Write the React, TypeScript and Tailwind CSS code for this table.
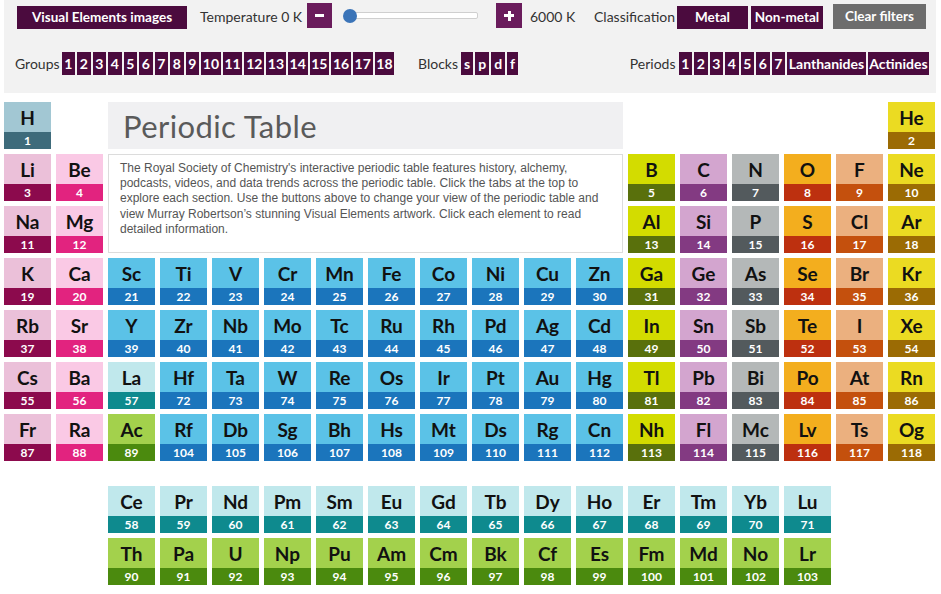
import React from 'react'

type Kind = 'h' | 'g1' | 'g2' | 'tm' | 'la' | 'ac' | 'g13' | 'g14' | 'g15' | 'g16' | 'g17' | 'g18'

const COLORS: Record<Kind, { top: string; bot: string }> = {
  h: { top: 'bg-[#a2c7d3]', bot: 'bg-[#3e6b7b]' },
  g1: { top: 'bg-[#ebc0d9]', bot: 'bg-[#8c0a4d]' },
  g2: { top: 'bg-[#fac9e5]', bot: 'bg-[#e2237f]' },
  tm: { top: 'bg-[#5bc2e7]', bot: 'bg-[#1b75bc]' },
  la: { top: 'bg-[#c0e8ec]', bot: 'bg-[#0e8a8e]' },
  ac: { top: 'bg-[#a3d14c]', bot: 'bg-[#4b8a0e]' },
  g13: { top: 'bg-[#d3dc00]', bot: 'bg-[#59700c]' },
  g14: { top: 'bg-[#d3a5cf]', bot: 'bg-[#833a82]' },
  g15: { top: 'bg-[#b4b8b8]', bot: 'bg-[#535a5d]' },
  g16: { top: 'bg-[#f3ae1e]', bot: 'bg-[#bd300f]' },
  g17: { top: 'bg-[#ebb07f]', bot: 'bg-[#c4500d]' },
  g18: { top: 'bg-[#ebdb22]', bot: 'bg-[#9b6b04]' },
}

const COL_START = [
  'col-start-1', 'col-start-2', 'col-start-3', 'col-start-4', 'col-start-5', 'col-start-6',
  'col-start-7', 'col-start-8', 'col-start-9', 'col-start-10', 'col-start-11', 'col-start-12',
  'col-start-13', 'col-start-14', 'col-start-15', 'col-start-16', 'col-start-17', 'col-start-18',
]
const ROW_START = ['row-start-1', 'row-start-2', 'row-start-3', 'row-start-4', 'row-start-5', 'row-start-6', 'row-start-7']

const P4 = 'K Ca Sc Ti V Cr Mn Fe Co Ni Cu Zn Ga Ge As Se Br Kr'.split(' ')
const P5 = 'Rb Sr Y Zr Nb Mo Tc Ru Rh Pd Ag Cd In Sn Sb Te I Xe'.split(' ')
const P6 = 'Cs Ba La Hf Ta W Re Os Ir Pt Au Hg Tl Pb Bi Po At Rn'.split(' ')
const P7 = 'Fr Ra Ac Rf Db Sg Bh Hs Mt Ds Rg Cn Nh Fl Mc Lv Ts Og'.split(' ')
const LAN = 'Ce Pr Nd Pm Sm Eu Gd Tb Dy Ho Er Tm Yb Lu'.split(' ')
const ACT = 'Th Pa U Np Pu Am Cm Bk Cf Es Fm Md No Lr'.split(' ')

interface El {
  sym: string
  num: number
  row: number
  col: number
}

const buildMain = (): El[] => {
  const els: El[] = [
    { sym: 'H', num: 1, row: 1, col: 1 },
    { sym: 'He', num: 2, row: 1, col: 18 },
    { sym: 'Li', num: 3, row: 2, col: 1 },
    { sym: 'Be', num: 4, row: 2, col: 2 },
    { sym: 'Na', num: 11, row: 3, col: 1 },
    { sym: 'Mg', num: 12, row: 3, col: 2 },
  ]
  'B C N O F Ne'.split(' ').forEach((s, i) => els.push({ sym: s, num: 5 + i, row: 2, col: 13 + i }))
  'Al Si P S Cl Ar'.split(' ').forEach((s, i) => els.push({ sym: s, num: 13 + i, row: 3, col: 13 + i }))
  P4.forEach((s, i) => els.push({ sym: s, num: 19 + i, row: 4, col: 1 + i }))
  P5.forEach((s, i) => els.push({ sym: s, num: 37 + i, row: 5, col: 1 + i }))
  P6.forEach((s, i) => els.push({ sym: s, num: i < 3 ? 55 + i : 69 + i, row: 6, col: 1 + i }))
  P7.forEach((s, i) => els.push({ sym: s, num: i < 3 ? 87 + i : 101 + i, row: 7, col: 1 + i }))
  return els
}

const kindOf = (num: number, col: number): Kind => {
  if (num === 1) return 'h'
  if (num >= 57 && num <= 71) return 'la'
  if (num >= 89 && num <= 103) return 'ac'
  if (col === 1) return 'g1'
  if (col === 2) return 'g2'
  if (col <= 12) return 'tm'
  return (['g13', 'g14', 'g15', 'g16', 'g17', 'g18'] as Kind[])[col - 13]
}

const Cell: React.FC<{ el: El; className?: string }> = ({ el, className = '' }) => {
  const c = COLORS[kindOf(el.num, el.col)]
  return (
    <div className={`flex flex-col w-[47px] h-[47px] ${className}`}>
      <div className={`h-[30px] flex items-center justify-center pt-[2px] text-[19px] font-bold text-[#111] ${c.top}`}>
        {el.sym}
      </div>
      <div className={`h-[17px] flex items-center justify-center text-[12px] font-bold text-white ${c.bot}`}>
        {el.num}
      </div>
    </div>
  )
}

const Chip: React.FC<{ label: string; className?: string }> = ({ label, className = '' }) => (
  <div className={`h-[23px] flex items-center justify-center bg-[#4b0b3e] text-white font-bold text-[14px] ${className}`}>
    {label}
  </div>
)

const App: React.FC = () => {
  const main = buildMain()
  const groups = Array.from({ length: 18 }, (_, i) => String(i + 1))

  return (
    <div className="w-[941px] h-[594px] bg-white font-['Lato',sans-serif] overflow-hidden">
      {/* filter bar */}
      <div className="ml-[4px] w-[932px] h-[93px] bg-[#f2f2f2] pt-[2px]">
        <div className="flex items-center h-[27px]">
          <div className="ml-[13px] w-[170px] h-[23px] mt-[3px] flex items-center justify-center bg-[#4b0b3e] text-white font-bold text-[13.5px]">
            Visual Elements images
          </div>
          <div className="ml-[13px] w-[107px] mt-[2px] text-[14px] text-[#333]">Temperature 0 K</div>
          <button className="w-[25px] h-[25px] flex items-center justify-center bg-[#6a1c5c]">
            <span className="block w-[9px] h-[3px] bg-white" />
          </button>
          <div className="relative ml-[11px] w-[135px] h-[14px] flex items-center">
            <div className="ml-[2px] w-[133px] h-[7px] bg-white border border-[#cfcfcf] rounded-[2px]" />
            <div className="absolute left-0 top-0 w-[14px] h-[14px] rounded-full bg-[#3b74b8]" />
          </div>
          <button className="ml-[18px] w-[26px] h-[25px] flex items-center justify-center bg-[#6a1c5c] relative">
            <span className="block w-[10px] h-[3px] bg-white" />
            <span className="absolute block w-[3px] h-[10px] bg-white" />
          </button>
          <div className="ml-[8px] w-[64px] mt-[2px] text-[14px] text-[#333]">6000 K</div>
          <div className="w-[83px] mt-[2px] text-[14px] text-[#333]">Classification</div>
          <div className="mt-[3px] w-[71px] h-[23px] flex items-center justify-center bg-[#4b0b3e] text-white font-bold text-[13.5px]">
            Metal
          </div>
          <div className="ml-[3px] mt-[3px] w-[72px] h-[23px] flex items-center justify-center bg-[#4b0b3e] text-white font-bold text-[13.5px]">
            Non-metal
          </div>
          <div className="ml-[10px] mt-[2px] w-[93px] h-[25px] flex items-center justify-center bg-[#6d6d6d] text-white font-bold text-[13.5px]">
            Clear filters
          </div>
        </div>

        <div className="flex items-center mt-[23px] h-[23px]">
          <div className="ml-[11px] w-[403px] flex items-center">
            <span className="text-[14px] text-[#333] mr-[2px]">Groups</span>
            <div className="flex gap-[2px]">
              {groups.map((g) => (
                <Chip key={g} label={g} className={g.length > 1 ? 'w-[19.7px]' : 'w-[13.5px]'} />
              ))}
            </div>
          </div>
          <span className="text-[14px] text-[#333] mr-[3px]">Blocks</span>
          <div className="flex gap-[2px]">
            {['s', 'p', 'd', 'f'].map((b) => (
              <Chip key={b} label={b} className="px-[3px]" />
            ))}
          </div>
          <div className="ml-auto mr-[7px] flex items-center">
            <span className="text-[14px] text-[#333] mr-[3px]">Periods</span>
            <div className="flex gap-[2px]">
              {['1', '2', '3', '4', '5', '6', '7'].map((p) => (
                <Chip key={p} label={p} className="w-[13.5px]" />
              ))}
              <Chip label="Lanthanides" className="w-[79px]" />
              <Chip label="Actinides" className="w-[61px]" />
            </div>
          </div>
        </div>
      </div>

      {/* main table */}
      <div className="ml-[4px] mt-[9px] grid grid-cols-[repeat(18,47px)] grid-rows-[repeat(7,47px)] gap-[5px]">
        {main.map((el) => (
          <Cell key={el.num} el={el} className={`${COL_START[el.col - 1]} ${ROW_START[el.row - 1]}`} />
        ))}
        <div className="col-start-3 col-span-10 row-start-1 bg-[#f0f0f2] flex items-center pl-[15px] pt-[1px]">
          <span className="text-[31px] text-[#5a5a5a] tracking-[0.4px]">Periodic Table</span>
        </div>
        <div className="col-start-3 col-span-10 row-start-2 row-span-2 bg-white border border-[#dcdcdc] pl-[11px] pt-[6px] font-['Liberation_Sans',Arial,sans-serif] text-[12px] leading-[15.2px] text-[#555]">
          The Royal Society of Chemistry's interactive periodic table features history, alchemy,
          <br />
          podcasts, videos, and data trends across the periodic table. Click the tabs at the top to
          <br />
          explore each section. Use the buttons above to change your view of the periodic table and
          <br />
          view Murray Robertson’s stunning Visual Elements artwork. Click each element to read
          <br />
          detailed information.
        </div>
      </div>

      {/* f-block */}
      <div className="ml-[108px] mt-[25px] grid grid-cols-[repeat(14,47px)] gap-[5px]">
        {LAN.map((s, i) => (
          <Cell key={s} el={{ sym: s, num: 58 + i, row: 8, col: 3 + i }} />
        ))}
        {ACT.map((s, i) => (
          <Cell key={s} el={{ sym: s, num: 90 + i, row: 9, col: 3 + i }} />
        ))}
      </div>
    </div>
  )
}

export default App
